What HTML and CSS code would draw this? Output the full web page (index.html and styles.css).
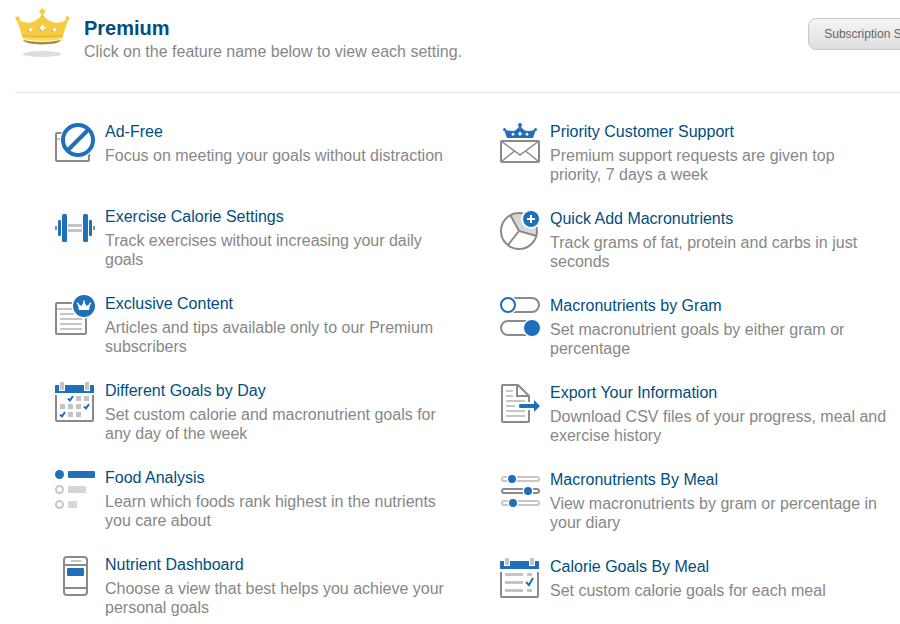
FILE: index.html
```html
<!DOCTYPE html>
<html lang="en">
<head>
	<meta charset="utf-8">
	<title>Premium</title>
	<link rel="stylesheet" href="styles.css">
</head>
<body>
	<div class="header">
		<svg class="crown" viewBox="0 0 55 50" aria-hidden="true">
			<ellipse cx="27" cy="46" rx="19.5" ry="3" fill="#dedede"/>
			<path d="M8 32Q27 36 46 32Q45 36 27 36.5Q10 36 8 32Z" fill="#b08a3c"/>
			<path d="M1.5 10.5Q8 15 15 14.7Q24 13 27.3 5Q31 13 40 14.7Q47 15 53.5 10.5L47 31Q27 34.5 8 31Z" fill="#f9cb42"/>
			<path d="M8 30Q27 32.5 47 30" fill="none" stroke="#fbdf48" stroke-width="2"/>
			<path d="M7.5 27.8Q27 29.5 47.5 27.8" fill="none" stroke="#dcae38" stroke-width="1"/>
			<path d="M27.3 0l3.5 3.5-3.5 3.5-3.5-3.5zM0 9.5l3.5-1.5 1.5 3.5-3.5 1.5zM55 9.5l-3.5-1.5-1.5 3.5 3.5 1.5z" fill="#f9cb42"/>
			<path d="M26.5 16.5l3.5 3.5-3.5 3.5-3.5-3.5zM14.5 19.5l2.2 2.5-2.2 2.5-2.2-2.5zM38.5 19.5l2.2 2.5-2.2 2.5-2.2-2.5z" fill="#c99c34"/>
			<path d="M27.3 16.5l3.3 3.3-3.3 3.3-3.3-3.3zM15.3 19.5l2.2 2.3-2.2 2.3-2.2-2.3zM39.3 19.5l2.2 2.3-2.2 2.3-2.2-2.3z" fill="#fff"/>
		</svg>
		<div class="heading">
			<h1>Premium</h1>
			<p>Click on the feature name below to view each setting.</p>
		</div>
		<button class="button" type="button">Subscription Settings</button>
	</div>

	<div class="features">
		<ul class="column">
			<li>
				<svg class="icon" viewBox="0 0 40 40" aria-hidden="true">
					<rect class="line" x="1" y="10" width="33" height="28" rx="1"/>
					<path class="soft" d="M2 16H10"/>
					<circle cx="23" cy="17" r="18" fill="#fff"/>
					<circle cx="23" cy="17" r="15" fill="#fff" stroke="#1f6fbb" stroke-width="4"/>
					<path d="M12.5 27.5L33.5 6.5" stroke="#1f6fbb" stroke-width="4"/>
				</svg>
				<div class="text">
					<a href="#ad-free">Ad-Free</a>
					<p>Focus on meeting your goals without distraction</p>
				</div>
			</li>
			<li>
				<svg class="icon" viewBox="0 0 40 40" aria-hidden="true">
					<path class="grey" d="M13 16h14v3H13zM13 21h14v3H13z"/>
					<path class="dark" d="M0 18h2v4H0zM38 18h2v4h-2z"/>
					<rect class="blue" x="7" y="6" width="5" height="28" rx="1.5"/>
					<rect class="blue" x="28" y="6" width="5" height="28" rx="1.5"/>
					<rect class="blue" x="3" y="12" width="3" height="16" rx="1"/>
					<rect class="blue" x="34" y="12" width="3" height="16" rx="1"/>
				</svg>
				<div class="text">
					<a href="#exercise-calories">Exercise Calorie Settings</a>
					<p>Track exercises without increasing your daily goals</p>
				</div>
			</li>
			<li>
				<svg class="icon" viewBox="0 0 40 40" aria-hidden="true">
					<rect class="line" x="1" y="8" width="30" height="31" rx="1"/>
					<path class="soft" d="M2 14H17M5 19H19M5 24H27M5 29H27M5 34H27"/>
					<circle cx="29" cy="11" r="12.5" fill="#fff"/>
					<circle class="blue" cx="29" cy="11" r="11"/>
					<path d="M24 15L22.7 8.5L26.5 11L29 6.5L31.5 11L35.3 8.5L34 15Z" fill="#fff"/>
					<g fill="#fff"><circle cx="22.7" cy="8.5" r="1"/><circle cx="29" cy="6.5" r="1"/><circle cx="35.3" cy="8.5" r="1"/></g>
				</svg>
				<div class="text">
					<a href="#exclusive-content">Exclusive Content</a>
					<p>Articles and tips available only to our Premium subscribers</p>
				</div>
			</li>
			<li>
				<svg class="icon" viewBox="0 0 40 40" aria-hidden="true">
					<path class="line" d="M1 13V38Q1 39 2 39H37Q38 39 38 38V13"/>
					<path class="blue" d="M0 11V4Q0 3 1 3H38Q39 3 39 4V11Z"/>
					<path fill="#fff" d="M4 0h6v9H4zM29 0h6v9h-6z"/>
					<path class="grey" d="M5 0h4v8H5zM30 0h4v8h-4z"/>
					<path class="grey" d="M21 14h5v5h-5zM29 14h5v5h-5zM5 22h5v5H5zM13 22h5v5h-5zM21 22h5v5h-5zM13 30h5v5h-5zM21 30h5v5h-5z"/>
					<path class="check" d="M13 16.5l2 2 3-4.5M29 24.5l2 2 3-4.5M5 32.5l2 2 3-4.5"/>
				</svg>
				<div class="text">
					<a href="#goals-by-day">Different Goals by Day</a>
					<p>Set custom calorie and macronutrient goals for any day of the week</p>
				</div>
			</li>
			<li>
				<svg class="icon" viewBox="0 0 40 40" aria-hidden="true">
					<circle class="blue" cx="4.5" cy="5.5" r="4.5"/>
					<circle class="soft" cx="4.5" cy="20.5" r="3.5"/>
					<circle class="soft" cx="4.5" cy="35.5" r="3.5"/>
					<rect class="blue" x="13" y="2" width="27" height="7" rx="1"/>
					<rect class="pale" x="13" y="17" width="18" height="7" rx="1"/>
					<rect class="pale" x="13" y="32" width="9" height="7" rx="1"/>
				</svg>
				<div class="text">
					<a href="#food-analysis">Food Analysis</a>
					<p>Learn which foods rank highest in the nutrients you care about</p>
				</div>
			</li>
			<li>
				<svg class="icon" viewBox="0 0 40 40" aria-hidden="true">
					<rect class="line" x="9" y="1" width="23" height="38" rx="3"/>
					<path class="line" d="M9 9H32M9 32H32"/>
					<path class="soft" d="M16 5H26"/>
					<rect class="blue" x="12" y="12" width="17" height="8" rx="1"/>
				</svg>
				<div class="text">
					<a href="#nutrient-dashboard">Nutrient Dashboard</a>
					<p>Choose a view that best helps you achieve your personal goals</p>
				</div>
			</li>
		</ul>

		<ul class="column">
			<li>
				<svg class="icon" viewBox="0 0 40 40" aria-hidden="true">
					<rect class="line" x="1" y="18" width="38" height="21" rx="1"/>
					<path class="line thin" d="M1 18L20 32L39 18M2 38L14.5 28M38 38L25.5 28"/>
					<path class="blue" d="M7 15L4 6.5Q12 9 15 7.5Q18.5 6 20 2Q21.5 6 25 7.5Q28 9 36 6.5L33 15Z"/>
					<g class="blue"><circle cx="20" cy="2" r="2"/><circle cx="4.5" cy="6.5" r="1.5"/><circle cx="35.5" cy="6.5" r="1.5"/></g>
					<path fill="#fff" d="M13 9.5l1.8 1.8-1.8 1.8-1.8-1.8zM20 8.5l2 2.3-2 2.3-2-2.3zM27 9.5l1.8 1.8-1.8 1.8-1.8-1.8z"/>
				</svg>
				<div class="text">
					<a href="#priority-support">Priority Customer Support</a>
					<p>Premium support requests are given top priority, 7 days a week</p>
				</div>
			</li>
			<li>
				<svg class="icon" viewBox="0 0 40 40" aria-hidden="true">
					<path class="pale" d="M19 21L10.5 5.5A18 18 0 0 1 36.5 26Z"/>
					<circle class="line" cx="19" cy="21" r="18"/>
					<path class="line" d="M10.5 5.5L19 21L36.5 26M19 21L8 35"/>
					<circle cx="31" cy="9" r="10" fill="#fff"/>
					<circle class="blue" cx="31" cy="9" r="8"/>
					<path d="M27 9H35M31 5V13" stroke="#fff" stroke-width="2"/>
				</svg>
				<div class="text">
					<a href="#quick-add">Quick Add Macronutrients</a>
					<p>Track grams of fat, protein and carbs in just seconds</p>
				</div>
			</li>
			<li>
				<svg class="icon" viewBox="0 0 40 40" aria-hidden="true">
					<rect class="line" x="1" y="1" width="38" height="14" rx="7"/>
					<circle cx="8" cy="8" r="9.5" fill="#fff"/>
					<circle cx="8" cy="8" r="7" fill="#fff" stroke="#1f6fbb" stroke-width="2"/>
					<rect class="line" x="1" y="24" width="38" height="14" rx="7"/>
					<circle cx="32" cy="31" r="9.5" fill="#fff"/>
					<circle class="blue" cx="32" cy="31" r="8"/>
				</svg>
				<div class="text">
					<a href="#macros-by-gram">Macronutrients by Gram</a>
					<p>Set macronutrient goals by either gram or percentage</p>
				</div>
			</li>
			<li>
				<svg class="icon" viewBox="0 0 40 40" aria-hidden="true">
					<path class="line" d="M29 18V12L18 1H3Q2 1 2 2V37Q2 38 3 38H28Q29 38 29 37V26M17 1V12H29"/>
					<path class="soft" d="M6 7H13M6 12H13M6 17H25M6 22H15M6 27H25M6 32H25"/>
					<path class="blue" d="M20 20H34V16L40 22L34 28V24H20Q19 24 19 22Q19 20 20 20Z"/>
				</svg>
				<div class="text">
					<a href="#export">Export Your Information</a>
					<p>Download CSV files of your progress, meal and exercise history</p>
				</div>
			</li>
			<li>
				<svg class="icon" viewBox="0 0 40 40" aria-hidden="true">
					<rect class="soft" x="2" y="6" width="37" height="4" rx="2"/>
					<rect class="line" x="2" y="18" width="37" height="4" rx="2"/>
					<rect class="soft" x="2" y="30" width="37" height="4" rx="2"/>
					<g fill="#fff"><circle cx="12" cy="8" r="5.5"/><circle cx="28" cy="20" r="5.5"/><circle cx="13" cy="32" r="5.5"/></g>
					<g class="blue"><circle cx="12" cy="8" r="4"/><circle cx="28" cy="20" r="4"/><circle cx="13" cy="32" r="4"/></g>
				</svg>
				<div class="text">
					<a href="#macros-by-meal">Macronutrients By Meal</a>
					<p>View macronutrients by gram or percentage in your diary</p>
				</div>
			</li>
			<li>
				<svg class="icon" viewBox="0 0 40 40" aria-hidden="true">
					<path class="line" d="M1 14V38Q1 39 2 39H37Q38 39 38 38V14"/>
					<path class="blue" d="M0 11V4Q0 3 1 3H38Q39 3 39 4V11Z"/>
					<path fill="#fff" d="M4 0h6v8H4zM29 0h6v8h-6z"/>
					<path class="grey" d="M5 0h4v7H5zM30 0h4v7h-4z"/>
					<path class="grey" d="M5 15h18v3H5zM5 23h18v3H5zM5 31h18v3H5zM27 15h5v3h-5zM27 31h5v3h-5z"/>
					<path class="check" d="M26 24l3 3 4-7"/>
				</svg>
				<div class="text">
					<a href="#calories-by-meal">Calorie Goals By Meal</a>
					<p>Set custom calorie goals for each meal</p>
				</div>
			</li>
		</ul>
	</div>
</body>
</html>
```

FILE: styles.css
```css
html { overflow-x: hidden; }
body { margin: 0; padding: 0 0 0 15px; background: #ffffff; font-family: "Liberation Sans", Arial, sans-serif; font-size: 16px; line-height: 19px; color: #878787; overflow: hidden; }
h1, p, ul { margin: 0; padding: 0; }
a { color: #004e7e; text-decoration: none; }
a:hover { text-decoration: underline; }

.header { display: flex; align-items: flex-start; padding: 8px 0 28px 0; border-bottom: 1px solid #e0e0e0; }
.crown { width: 55px; height: 50px; flex: none; }
.heading { padding: 8px 0 0 14px; }
.heading h1 { font-size: 20px; line-height: 24px; color: #004e7e; }
.heading p { line-height: 24px; }

.button {
    flex: none;
    height: 32px;
    margin: 10px -53px 0 auto;
    padding: 0 15px;
    font-family: inherit;
    font-size: 12px;
    color: #666666;
    background: linear-gradient(#f5f5f5, #dedede);
    border: 1px solid #c8c8c8;
    border-radius: 8px;
    cursor: pointer;
}

.features { display: grid; grid-template-columns: 1fr 1fr; gap: 50px; padding: 29px 5px 0 40px; }
.column { list-style: none; display: flex; flex-direction: column; gap: 25px; }
.column li { display: flex; gap: 10px; min-height: 60px; padding-right: 6px; }
.text a { display: block; margin-bottom: 5px; }

/* icons */
.icon { width: 40px; height: 40px; margin-top: 1px; flex: none; }
.line { fill: none; stroke: #8a8a8a; stroke-width: 2; }
.thin { stroke-width: 1.5; }
.soft { fill: none; stroke: #c6c6c6; stroke-width: 2; }
.check { fill: none; stroke: #1f6fbb; stroke-width: 2; }
.blue { fill: #1f6fbb; }
.grey { fill: #c4c4c4; }
.pale { fill: #d6d6d6; }
.dark { fill: #8a8a8a; }
```
